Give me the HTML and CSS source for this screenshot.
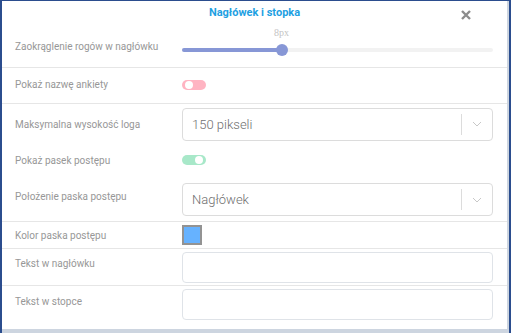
FILE: index.html
```html
<!DOCTYPE html>
<html lang="pl">
<head>
  <meta charset="UTF-8">
  <title>Nagłówek i stopka</title>
  <link rel="stylesheet" href="styles.css">
</head>
<body>
  <div class="frame">
    <div class="modal">
      <div class="modal-header">
        <h2 class="modal-title">Nagłówek i stopka</h2>
        <span class="close">
          <svg width="10" height="10" viewBox="0 0 10 10"><path d="M1 1L9 9M9 1L1 9" stroke="#8c8c8c" stroke-width="2.4"/></svg>
        </span>
      </div>

      <div class="row row-slider">
        <div class="label">Zaokrąglenie rogów w nagłówku</div>
        <div class="control">
          <div class="slider">
            <div class="slider-fill" style="width:100px"></div>
            <div class="slider-thumb" style="left:100px">
              <span class="slider-value">8px</span>
            </div>
          </div>
        </div>
      </div>

      <div class="row row-toggle divided">
        <div class="label">Pokaż nazwę ankiety</div>
        <div class="control"><span class="toggle off"></span></div>
      </div>

      <div class="row row-select divided">
        <div class="label">Maksymalna wysokość loga</div>
        <div class="control">
          <div class="select"><span>150 pikseli</span><span class="select-arrow"><svg width="10" height="6" viewBox="0 0 10 6"><path d="M1 1L5 5L9 1" fill="none" stroke="#c8c8c8" stroke-width="1"/></svg></span></div>
        </div>
      </div>

      <div class="row row-toggle2">
        <div class="label">Pokaż pasek postępu</div>
        <div class="control"><span class="toggle on"></span></div>
      </div>

      <div class="row row-select2">
        <div class="label">Położenie paska postępu</div>
        <div class="control">
          <div class="select"><span>Nagłówek</span><span class="select-arrow"><svg width="10" height="6" viewBox="0 0 10 6"><path d="M1 1L5 5L9 1" fill="none" stroke="#c8c8c8" stroke-width="1"/></svg></span></div>
        </div>
      </div>

      <div class="row row-color divided">
        <div class="label">Kolor paska postępu</div>
        <div class="control"><span class="swatch"></span></div>
      </div>

      <div class="row row-input divided">
        <div class="label">Tekst w nagłówku</div>
        <div class="control"><input type="text" class="text-input"></div>
      </div>

      <div class="row row-input2 divided">
        <div class="label">Tekst w stopce</div>
        <div class="control"><input type="text" class="text-input"></div>
      </div>
    </div>
  </div>
</body>
</html>
```

FILE: styles.css
```css
html, body {
  margin: 0;
  padding: 0;
}
body {
  width: 511px;
  height: 333px;
  overflow: hidden;
  font-family: Roboto, "Noto Sans", sans-serif;
  background-color: #cdd5e0;
}
.frame {
  box-sizing: border-box;
  width: 511px;
  height: 333px;
  border-top: 1px solid #2b4d8e;
  border-left: 2px solid #2b4d8e;
  border-right: 2px solid #2b4d8e;
  background-color: #cdd5e0;
}
.modal {
  width: 505px;
  height: 328px;
  background-color: #fff;
}
.modal-header {
  position: relative;
  height: 27px;
}
.modal-title {
  margin: 0;
  padding-top: 5px;
  text-align: center;
  font-size: 11px;
  font-weight: bold;
  color: #1ea0e2;
  line-height: 14px;
}
.close {
  position: absolute;
  right: 36px;
  top: 9px;
  line-height: 0;
}
.row {
  display: flex;
  align-items: center;
  box-sizing: border-box;
}
.row.divided {
  border-top: 1px solid #e6e6e6;
}
.label {
  width: 180px;
  padding-left: 13px;
  box-sizing: border-box;
  font-size: 10px;
  color: #979797;
}
.control {
  width: 311px;
}
.row-slider { height: 39px; padding-bottom: 2px; }
.row-toggle { height: 36px; padding-bottom: 2px; }
.row-select { height: 39px; padding-top: 2px; }
.row-toggle2 { height: 36px; }
.row-select2 { height: 43px; }
.row-select2 .label { padding-bottom: 6px; }
.row-color { height: 27px; }
.row-input { height: 37px; }
.row-input .label { padding-bottom: 8px; }
.row-input2 { height: 36px; padding-top: 1px; }
.row-input2 .label { padding-bottom: 5px; }

.slider {
  position: relative;
  height: 4px;
  margin-top: 6px;
  border-radius: 2px;
  background-color: #f2f2f2;
}
.slider-fill {
  height: 4px;
  border-radius: 2px;
  background-color: #8797d6;
}
.slider-thumb {
  position: absolute;
  top: -4px;
  width: 12px;
  height: 12px;
  margin-left: -6px;
  border-radius: 50%;
  background-color: #8797d6;
}
.slider-value {
  position: absolute;
  top: -17px;
  left: -2px;
  font-family: "Liberation Serif", serif;
  font-size: 10px;
  color: #c4c4c4;
}
.toggle {
  display: block;
  position: relative;
  width: 24px;
  height: 10px;
  border-radius: 5px;
}
.toggle::after {
  content: "";
  position: absolute;
  top: 1px;
  width: 8px;
  height: 8px;
  border-radius: 50%;
  background-color: #fff;
}
.toggle.off { background-color: #ffb4c2; }
.toggle.off::after { left: 3px; }
.toggle.on { background-color: #a8e8c9; }
.toggle.on::after { right: 3px; }

.select {
  display: flex;
  align-items: center;
  justify-content: space-between;
  box-sizing: border-box;
  height: 33px;
  padding-left: 9px;
  border: 1px solid #dcdcdc;
  border-radius: 4px;
  font-size: 13px;
  font-weight: 300;
  color: #6f6f6f;
}
.select-arrow {
  display: flex;
  align-items: center;
  justify-content: center;
  width: 30px;
  height: 21px;
  border-left: 1px solid #dcdcdc;
}
.swatch {
  display: block;
  box-sizing: border-box;
  width: 20px;
  height: 20px;
  border: 2px solid #939393;
  background-color: #66b2ff;
}
.text-input {
  display: block;
  box-sizing: border-box;
  width: 311px;
  height: 31px;
  margin: 0;
  border: 1px solid #dfe3e8;
  border-radius: 4px;
  background-color: #fff;
}
```
